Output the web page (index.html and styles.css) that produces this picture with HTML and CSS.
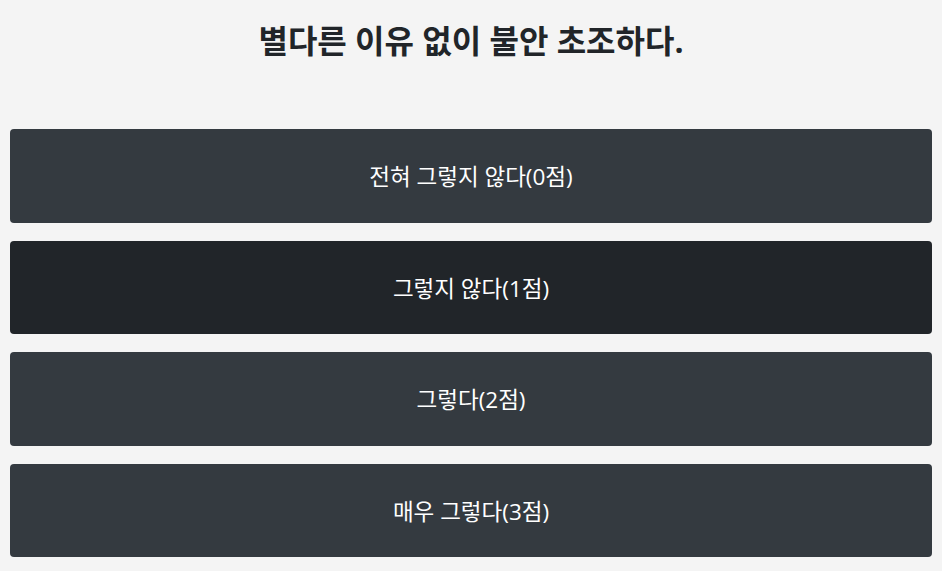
FILE: index.html
```html
<!DOCTYPE html>
<html lang="ko">
<head>
  <meta charset="UTF-8">
  <meta name="viewport" content="width=device-width, initial-scale=1.0">
  <title>불안 척도 검사</title>
  <link rel="stylesheet" href="styles.css">
</head>
<body>
  <div class="quiz">
    <h1 class="question">별다른 이유 없이 불안 초조하다.</h1>
    <div class="answers">
      <button class="answer">전혀 그렇지 않다(0점)</button>
      <button class="answer active">그렇지 않다(1점)</button>
      <button class="answer">그렇다(2점)</button>
      <button class="answer">매우 그렇다(3점)</button>
    </div>
  </div>
</body>
</html>
```

FILE: styles.css
```css
body {
  margin: 0;
  background-color: #f4f4f4;
  font-family: "Open Sans", "Noto Sans CJK KR", sans-serif;
  color: #212529;
}

.quiz {
  padding: 0 10px;
}

.question {
  margin: 0;
  padding: 17px 0 0;
  height: 129px;
  box-sizing: border-box;
  text-align: center;
  font-size: 32px;
  font-weight: bold;
  line-height: 48px;
}

.answers {
  display: flex;
  flex-direction: column;
  gap: 18px;
}

.answer {
  height: 93.6px;
  border: none;
  border-radius: 4px;
  background-color: #343a40;
  color: #fff;
  font-family: inherit;
  font-size: 22.5px;
  cursor: pointer;
}

.answer.active,
.answer:hover {
  background-color: #212529;
}
```
